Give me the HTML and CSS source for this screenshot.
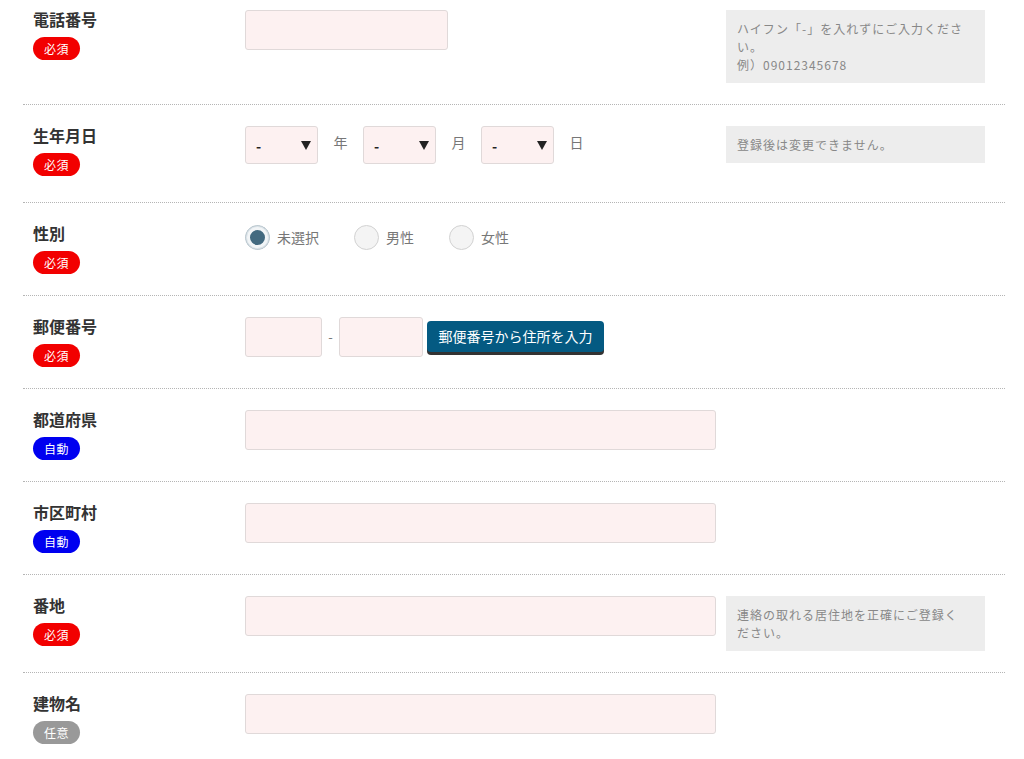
FILE: index.html
```html
<!DOCTYPE html>
<html lang="ja">
<head>
<meta charset="utf-8">
<title>会員情報入力</title>
<link rel="stylesheet" href="styles.css">
</head>
<body>
<div class="form">
  <div class="row row-first">
    <div class="label"><h3>電話番号</h3><span class="badge req">必須</span></div>
    <div class="field"><input class="text w-tel" type="text"></div>
    <div class="note">ハイフン「-」を入れずにご入力ください。<br>例）09012345678</div>
  </div>

  <div class="row">
    <div class="label"><h3>生年月日</h3><span class="badge req">必須</span></div>
    <div class="field dates">
      <select class="sel"><option>-</option></select><span class="unit">年</span>
      <select class="sel"><option>-</option></select><span class="unit">月</span>
      <select class="sel"><option>-</option></select><span class="unit">日</span>
    </div>
    <div class="note">登録後は変更できません。</div>
  </div>

  <div class="row">
    <div class="label"><h3>性別</h3><span class="badge req">必須</span></div>
    <div class="field radios">
      <label class="opt"><input type="radio" name="sex" checked><span>未選択</span></label>
      <label class="opt"><input type="radio" name="sex"><span>男性</span></label>
      <label class="opt"><input type="radio" name="sex"><span>女性</span></label>
    </div>
  </div>

  <div class="row">
    <div class="label"><h3>郵便番号</h3><span class="badge req">必須</span></div>
    <div class="field zip">
      <input class="text w-zip1" type="text"><span class="dash">-</span><input class="text w-zip2" type="text">
      <button class="btn" type="button">郵便番号から住所を入力</button>
    </div>
  </div>

  <div class="row">
    <div class="label"><h3>都道府県</h3><span class="badge auto">自動</span></div>
    <div class="field"><input class="text w-full" type="text"></div>
  </div>

  <div class="row">
    <div class="label"><h3>市区町村</h3><span class="badge auto">自動</span></div>
    <div class="field"><input class="text w-full" type="text"></div>
  </div>

  <div class="row">
    <div class="label"><h3>番地</h3><span class="badge req">必須</span></div>
    <div class="field"><input class="text w-full" type="text"></div>
    <div class="note">連絡の取れる居住地を正確にご登録ください。</div>
  </div>

  <div class="row row-last">
    <div class="label"><h3>建物名</h3><span class="badge opt-b">任意</span></div>
    <div class="field"><input class="text w-full" type="text"></div>
  </div>
</div>
</body>
</html>
```

FILE: styles.css
```css
* { box-sizing: border-box; }

html, body {
  margin: 0;
  padding: 0;
  background: #fff;
  font-family: "Noto Sans CJK JP", "Noto Sans", sans-serif;
  color: #333;
}

.form {
  width: 982px;
  margin-left: 23px;
}

.row {
  display: grid;
  grid-template-columns: 202px 471px 259px;
  column-gap: 10px;
  align-items: start;
  padding: 21px 0 21px 10px;
  border-bottom: 1px dotted #b5b5b5;
}

.row-first { padding-top: 10px; }
.row-last { border-bottom: none; }

.label h3 {
  margin: 0;
  font-size: 16px;
  line-height: 16px;
  font-weight: bold;
  color: #333;
  padding-top: 1px;
}

.badge {
  display: inline-block;
  margin-top: 10px;
  height: 23px;
  line-height: 23px;
  padding: 0 11px;
  border-radius: 12px;
  font-size: 12px;
  color: #fff;
  letter-spacing: 0.5px;
}
.badge.req { background: #f20000; }
.badge.auto { background: #0000f0; }
.badge.opt-b { background: #999; }

.field {
  display: flex;
  align-items: center;
}

.text {
  height: 40px;
  border: 1px solid #e0d9d9;
  border-radius: 3px;
  background: #fdf1f1;
  font: inherit;
  margin: 0;
  padding: 0 8px;
}
.w-tel { width: 203px; }
.w-full { width: 471px; }
.w-zip1 { width: 77px; }
.w-zip2 { width: 84px; }

.note {
  background: #ededed;
  color: #888;
  font-size: 12px;
  line-height: 18px;
  letter-spacing: 1px;
  padding: 10px 18px 9px 11px;
}

.dates {
  padding-bottom: 17px;
}
.sel {
  -webkit-appearance: none;
  appearance: none;
  width: 73px;
  height: 38px;
  margin: 0;
  border: 1px solid #e0d9d9;
  border-radius: 3px;
  background-color: #fdf1f1;
  background-image: url("data:image/svg+xml;utf8,<svg xmlns='http://www.w3.org/2000/svg' width='10' height='9'><path d='M0 0H10L5 9Z' fill='%23222'/></svg>");
  background-repeat: no-repeat;
  background-position: 55px 14px;
  padding: 2px 0 0 10px;
  font-family: inherit;
  font-size: 14px;
  font-weight: bold;
  color: #222;
}
.unit {
  font-size: 14px;
  color: #777;
  width: 45px;
  text-align: center;
  margin-top: -7px;
}

.radios {
  height: 25px;
  margin-top: 1px;
}
.opt {
  display: flex;
  align-items: center;
  margin-right: 35px;
  font-size: 14px;
  color: #777;
}
.opt span { margin-top: -2px; }
.opt input {
  -webkit-appearance: none;
  appearance: none;
  width: 25px;
  height: 25px;
  margin: 0 7px 0 0;
  border: 1px solid #d2d2d2;
  border-radius: 50%;
  background: #f4f4f4;
}
.opt input:checked {
  border-color: #c9d3d9;
  background: #436a80;
  box-shadow: inset 0 0 0 1px #dbe3e8, inset 0 0 0 4px #f2f5f7;
}

.zip {
  align-items: flex-start;
}
.dash {
  width: 17px;
  text-align: center;
  font-size: 13px;
  color: #777;
  line-height: 40px;
}
.btn {
  margin: 4px 0 0 4px;
  height: 31px;
  width: 177px;
  padding: 0;
  border: none;
  border-radius: 4px;
  background: #045a82;
  box-shadow: 0 3px 0 #333;
  color: #fff;
  font-family: inherit;
  font-size: 14px;
  line-height: 31px;
}
```
